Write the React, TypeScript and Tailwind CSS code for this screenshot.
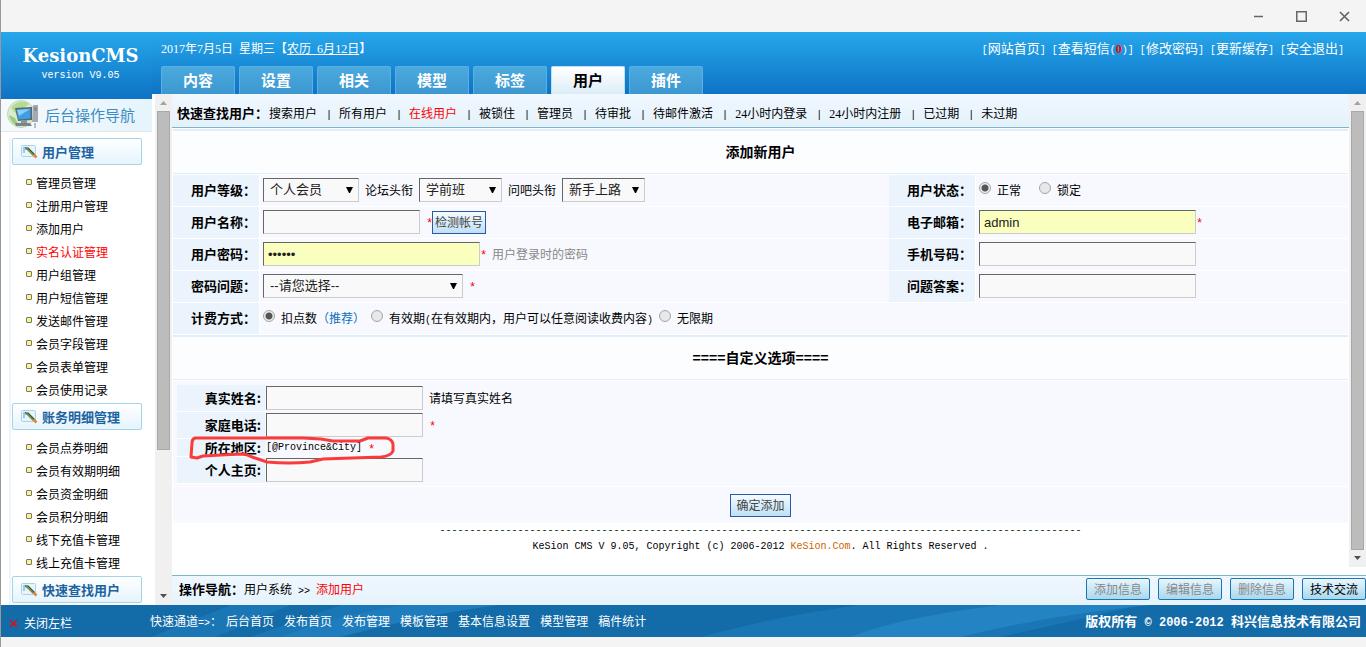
import { useState } from "react";
import type { ReactNode } from "react";
import clsx from "clsx";

const tabs = ["内容", "设置", "相关", "模型", "标签", "用户", "插件"];

const menuGroups = [
  {
    title: "用户管理",
    items: [
      "管理员管理",
      "注册用户管理",
      "添加用户",
      "实名认证管理",
      "用户组管理",
      "用户短信管理",
      "发送邮件管理",
      "会员字段管理",
      "会员表单管理",
      "会员使用记录",
    ],
  },
  {
    title: "账务明细管理",
    items: ["会员点券明细", "会员有效期明细", "会员资金明细", "会员积分明细", "线下充值卡管理", "线上充值卡管理"],
  },
  { title: "快速查找用户", items: [] },
];

const filters = [
  "搜索用户",
  "所有用户",
  "在线用户",
  "被锁住",
  "管理员",
  "待审批",
  "待邮件激活",
  "24小时内登录",
  "24小时内注册",
  "已过期",
  "未过期",
];

const shortcuts = ["后台首页", "发布首页", "发布管理", "模板管理", "基本信息设置", "模型管理", "稿件统计"];

const fieldClass =
  "h-6 border border-t-[#666] border-l-[#666] border-r-[#ccc] border-b-[#ccc] px-1 text-[13px] leading-5 text-[#222] outline-none font-['Liberation_Sans','Noto_Sans_CJK_SC',sans-serif]";

function Mono({ children }: { children: ReactNode }) {
  return (
    <span className="font-['Liberation_Mono','Noto_Sans_CJK_SC',monospace] text-[10px] leading-none">{children}</span>
  );
}

function Num({ children }: { children: ReactNode }) {
  return <span className="font-['Liberation_Serif',serif] text-xs leading-none">{children}</span>;
}

function Star() {
  return (
    <span className="inline-block w-1.5 pt-1 font-['Liberation_Mono',monospace] text-xs leading-3 text-[#f00]">*</span>
  );
}

function Filter({ text }: { text: string }) {
  const match = text.match(/^(\d+)(.*)$/);
  if (!match) return <>{text}</>;
  return (
    <>
      <Num>{match[1]}</Num>
      {match[2]}
    </>
  );
}

function Select({ id, value, className }: { id: string; value: string; className: string }) {
  return (
    <span className={clsx("relative inline-flex", className)}>
      <select id={id} className={clsx(fieldClass, "w-full appearance-none bg-[#f9f9f9] pl-1.5")}>
        <option>{value}</option>
      </select>
      <svg className="pointer-events-none absolute top-2 right-1.5" width="7" height="8" viewBox="0 0 7 8">
        <path d="M0 1h7L4 7h-1z" fill="#000" />
      </svg>
    </span>
  );
}

function Radio({ id, name, checked }: { id: string; name: string; checked?: boolean }) {
  return (
    <input
      id={id}
      type="radio"
      name={name}
      defaultChecked={checked}
      className="mb-1 size-3 shrink-0 appearance-none rounded-full border border-[#a5a5a5] bg-[#e6e9e9] checked:bg-[radial-gradient(circle,#555_0_3px,#eee_4px)]"
    />
  );
}

function Label({ htmlFor, children }: { htmlFor?: string; children: ReactNode }) {
  return (
    <th className="h-8 border-r border-b border-white bg-[#ebf4fc] pr-[3px] pb-px text-right text-[13px] font-bold">
      <label htmlFor={htmlFor}>{children}</label>
    </th>
  );
}

function Cell({ children, colSpan }: { children: ReactNode; colSpan?: number }) {
  return (
    <td colSpan={colSpan} className="h-8 border-b border-white bg-[#f7f9fe] pt-[3px] pl-[3px] align-top">
      <div className="flex min-h-6 items-center whitespace-nowrap">{children}</div>
    </td>
  );
}

function Scrollbar({ thumb }: { thumb: string }) {
  return (
    <div className="flex w-[17px] shrink-0 flex-col items-center bg-[#f0f0f0]">
      <svg width="17" height="17" viewBox="0 0 17 17">
        <path d="M5 11h7L8.500 7z" fill="#a3a3a3" />
      </svg>
      <div className="flex min-h-0 w-[13px] flex-1">
        <div className={clsx("w-full border border-[#a8a8a8] bg-[#bcbcbc]", thumb)} />
      </div>
      <svg width="17" height="17" viewBox="0 0 17 17">
        <path d="M5 6h7L8.500 10z" fill="#505050" />
      </svg>
    </div>
  );
}

function EditIcon() {
  return (
    <svg width="17" height="15" viewBox="0 0 17 15">
      <rect x=".5" y="1.500" width="14" height="11" rx="1" fill="#e7f4fc" stroke="#a9d3ea" />
      <path d="M2 3h5v3H4v3H2z" fill="#9ccbe8" />
      <path d="M4 3.500l3 1.500" stroke="#4d6f86" strokeWidth="1.500" />
      <path d="M6 4l7 7" stroke="#6f8f3c" strokeWidth="3" />
      <path d="M7 4l6.500 6.500" stroke="#3f4b3c" strokeWidth="1" />
      <path d="M13 11l2.500 2.500" stroke="#ef7d2d" strokeWidth="2.500" />
    </svg>
  );
}

function ComputerIcon() {
  return (
    <svg width="34" height="32" viewBox="0 0 34 32">
      <circle cx="14" cy="15" r="13.500" fill="#d8ecd0" stroke="#c3d4c6" />
      <path d="M4 9C8 2 18 1 22 5l-8 6-6 3z" fill="#b4dc90" />
      <path d="M2 16l6 3 4 8c-5-1-9-5-10-11z" fill="#9ccc7c" />
      <path d="M26 6h5v17h-6z" fill="#a3abb1" />
      <path d="M27 9h3M27 11h3" stroke="#6d767d" />
      <path d="M8 9l17-1v13l-14 1z" fill="#566875" />
      <path d="M9.500 10.500l14-1v10l-12 1z" fill="#3e9ee4" />
      <path d="M10 11l13-1-11 7z" fill="#8ccdf5" />
      <path d="M14 21h6v3h-6z" fill="#8b9499" />
      <path d="M8 24h15l2 3H9z" fill="#7d858a" />
      <path d="M28 24v5" stroke="#b4bec5" strokeWidth="2" />
    </svg>
  );
}

function Sidebar() {
  return (
    <aside className="flex w-[151px] shrink-0 flex-col overflow-hidden">
      <div className="flex h-[67px] shrink-0 flex-col items-center bg-linear-to-b from-[#27a7eb] to-[#0e73c5] pt-3 pl-2 text-white">
        <h1 className="font-['DejaVu_Serif',serif] text-lg leading-6 font-bold">KesionCMS</h1>
        <p className="font-['Liberation_Mono',monospace] text-[10px] leading-4">version V9.05</p>
      </div>
      <div className="mb-1.5 flex h-[33px] shrink-0 items-center gap-1 border-b border-[#e4e8ea] bg-linear-to-r from-[#f5f9fb] to-[#e6f4fc] pl-1.5 text-[15px] text-[#3b8dc4]">
        <ComputerIcon />
        后台操作导航
      </div>
      <nav className="ml-2 border-l-2 border-[#edf5fd] pl-px">
        {menuGroups.map((group) => (
          <div key={group.title} className="pb-0.5">
            <h2 className="flex h-[27px] w-[130px] items-center gap-1 rounded-xs border border-[#a5d3e8] bg-linear-to-b from-white to-[#e5f4fd] pl-2 text-[13px] font-bold text-[#1c639f]">
              <EditIcon />
              {group.title}
            </h2>
            <ul className="pt-1.5 pl-3.5">
              {group.items.map((item) => (
                <li key={item} className="flex h-[23px] items-center gap-1">
                  <span className="mb-0.5 size-1.5 rounded-[1px] border border-[#777] bg-[#fbf582]" />
                  <a href="#" className={item === "实名认证管理" ? "text-[#f00]" : "text-black"}>
                    {item}
                  </a>
                </li>
              ))}
            </ul>
          </div>
        ))}
      </nav>
    </aside>
  );
}

function Header() {
  const [active, setActive] = useState("用户");
  return (
    <header className="flex h-[62px] shrink-0 flex-col justify-between bg-linear-to-b from-[#27a7eb] to-[#0e73c5] pl-[9px] text-white">
      <div className="flex items-center justify-between pt-2 pr-[22px]">
        <p>
          <Num>2017</Num>年<Num>7</Num>月<Num>5</Num>日<Mono>&nbsp;</Mono>星期三【
          <a href="#" className="underline">
            农历<Mono>&nbsp;</Mono>
            <Num>6</Num>月<Num>12</Num>日
          </a>
          】
        </p>
        <nav className="flex gap-1.5 text-[13px]">
          <a href="#">
            <Mono>[</Mono>网站首页<Mono>]</Mono>
          </a>
          <a href="#">
            <Mono>[</Mono>查看短信<Mono>(</Mono>
            <b className="text-[#f00]">
              <Num>0</Num>
            </b>
            <Mono>)]</Mono>
          </a>
          <a href="#">
            <Mono>[</Mono>修改密码<Mono>]</Mono>
          </a>
          <a href="#">
            <Mono>[</Mono>更新缓存<Mono>]</Mono>
          </a>
          <a href="#">
            <Mono>[</Mono>安全退出<Mono>]</Mono>
          </a>
        </nav>
      </div>
      <div className="flex gap-1">
        {tabs.map((tab) => (
          <button
            key={tab}
            type="button"
            onClick={() => setActive(tab)}
            className={clsx(
              "h-7 w-[74px] rounded-t-xs border border-b-0 pb-0.5 text-[15px] font-bold",
              tab === active
                ? "border-[#bfe0f2] bg-linear-to-b from-white to-[#dcedf7] text-black"
                : "border-[#5bb0e3] bg-linear-to-b from-[#4baade] to-[#3c97d0] text-white"
            )}
          >
            {tab}
          </button>
        ))}
      </div>
    </header>
  );
}

function SectionTitle({ children }: { children: ReactNode }) {
  return (
    <h2 className="flex h-[45px] items-center justify-center border-t-2 border-b border-[#dfeefb] bg-[#fcfdff] pb-0.5 text-sm font-bold">
      {children}
    </h2>
  );
}

function CustomRow({ id, label, height, children }: { id?: string; label: string; height: string; children: ReactNode }) {
  return (
    <tr>
      <th className={clsx("w-[88px] border-b border-white bg-[#ebf4fc] pr-1 text-right text-[13px] leading-4", height)}>
        <label htmlFor={id}>{label}:</label>
      </th>
      <td className="pt-px pl-px align-top">
        <div className="flex items-center gap-1.5 leading-4">{children}</div>
      </td>
    </tr>
  );
}

function UserForm() {
  return (
    <form>
      <SectionTitle>添加新用户</SectionTitle>
      <table className="mt-px w-full table-fixed border-separate border-spacing-0">
        <colgroup>
          <col className="w-[87px]" />
          <col />
          <col className="w-[87px]" />
          <col className="w-[372px]" />
        </colgroup>
        <tbody>
          <tr>
            <Label htmlFor="level">用户等级：</Label>
            <Cell>
              <Select id="level" value="个人会员" className="w-24" />
              <label htmlFor="forum" className="mx-1.5">
                论坛头衔
              </label>
              <Select id="forum" value="学前班" className="w-[83px]" />
              <label htmlFor="ask" className="mx-1.5">
                问吧头衔
              </label>
              <Select id="ask" value="新手上路" className="w-[83px]" />
            </Cell>
            <Label>用户状态：</Label>
            <Cell>
              <Radio id="normal" name="state" checked />
              <label htmlFor="normal" className="mr-[18px] ml-1.5">
                正常
              </label>
              <Radio id="locked" name="state" />
              <label htmlFor="locked" className="ml-1.5">
                锁定
              </label>
            </Cell>
          </tr>
          <tr>
            <Label htmlFor="name">用户名称：</Label>
            <Cell>
              <input id="name" type="text" className={clsx(fieldClass, "mr-1.5 w-[157px] bg-[#f9f9f9]")} />
              <Star />
              <button
                type="button"
                className="h-[23px] border border-[#2c5aa8] bg-linear-to-b from-[#f4fbff] to-[#bfe0f5] px-0.5 text-[#444]"
              >
                检测帐号
              </button>
            </Cell>
            <Label htmlFor="mail">电子邮箱：</Label>
            <Cell>
              <input id="mail" type="text" defaultValue="admin" className={clsx(fieldClass, "w-[217px] bg-[#faffbd]")} />
              <Star />
            </Cell>
          </tr>
          <tr>
            <Label htmlFor="password">用户密码：</Label>
            <Cell>
              <input
                id="password"
                type="password"
                defaultValue="123456"
                className={clsx(fieldClass, "w-[217px] bg-[#faffbd]")}
              />
              <Star />
              <span className="ml-1.5 text-[#888]">用户登录时的密码</span>
            </Cell>
            <Label htmlFor="mobile">手机号码：</Label>
            <Cell>
              <input id="mobile" type="text" className={clsx(fieldClass, "w-[217px] bg-[#f9f9f9]")} />
            </Cell>
          </tr>
          <tr>
            <Label htmlFor="question">密码问题：</Label>
            <Cell>
              <Select id="question" value="--请您选择--" className="mr-1.5 w-[200px]" />
              <Star />
            </Cell>
            <Label htmlFor="answer">问题答案：</Label>
            <Cell>
              <input id="answer" type="text" className={clsx(fieldClass, "w-[217px] bg-[#f9f9f9]")} />
            </Cell>
          </tr>
          <tr>
            <Label>计费方式：</Label>
            <Cell colSpan={3}>
              <Radio id="points" name="charge" checked />
              <label htmlFor="points" className="mr-1.5 ml-1.5">
                扣点数<span className="text-[#0f6fc0]">（推荐）</span>
              </label>
              <Radio id="period" name="charge" />
              <label htmlFor="period" className="mr-1.5 ml-1.5">
                有效期<Mono>(</Mono>在有效期内，用户可以任意阅读收费内容<Mono>)</Mono>
              </label>
              <Radio id="forever" name="charge" />
              <label htmlFor="forever" className="ml-1.5">
                无限期
              </label>
            </Cell>
          </tr>
        </tbody>
      </table>
      <SectionTitle>====自定义选项====</SectionTitle>
      <div className="relative mt-px bg-[#f7f9fe] px-1 pt-1 pb-0.5">
        <table className="w-full border-separate border-spacing-0">
          <tbody>
            <CustomRow id="realname" label="真实姓名" height="h-[27px]">
              <input id="realname" type="text" className={clsx(fieldClass, "w-[157px] bg-[#f9f9f9]")} />
              请填写真实姓名
            </CustomRow>
            <CustomRow id="phone" label="家庭电话" height="h-[27px]">
              <input id="phone" type="text" className={clsx(fieldClass, "w-[157px] bg-[#f9f9f9]")} />
              <Star />
            </CustomRow>
            <CustomRow label="所在地区" height="h-[18px]">
              <Mono>[@Province&amp;City]</Mono>
              <Star />
            </CustomRow>
            <CustomRow id="homepage" label="个人主页" height="h-[27px]">
              <input id="homepage" type="text" className={clsx(fieldClass, "w-[157px] bg-[#f9f9f9]")} />
            </CustomRow>
          </tbody>
        </table>
        <svg className="pointer-events-none absolute top-[52px] left-3.5" width="212" height="34" viewBox="0 0 212 34">
          <path
            d="M8 5Q5 6 5 10L4 24L10 25L16 23L54 21Q60 21 65 24L80 29Q102 31 123 29L136 26L194 24Q204 23 206 18V11Q205 6 199 5L181 5L173 8H146L134 6L116 5Z"
            fill="none"
            stroke="#fb3b3b"
            strokeWidth="3"
            strokeLinejoin="round"
          />
        </svg>
      </div>
      <div className="mt-px flex h-9 items-center justify-center bg-[#f7f9fe]">
        <button
          type="submit"
          className="h-[23px] border border-[#2c5aa8] bg-linear-to-b from-[#f4fbff] to-[#bfe0f5] px-[5px] text-[#444]"
        >
          确定添加
        </button>
      </div>
    </form>
  );
}

function Toolbar() {
  return (
    <div className="flex h-[30px] shrink-0 items-center justify-between overflow-hidden border-t border-[#7fb4c9] bg-linear-to-b from-[#eff7ff] to-[#e6f3fb] pb-1 pl-[7px]">
      <p>
        <b className="text-[13px]">操作导航：</b>用户系统<Mono>&nbsp;&gt;&gt;&nbsp;</Mono>
        <span className="text-[#f00]">添加用户</span>
      </p>
      <div className="flex gap-2">
        {["添加信息", "编辑信息", "删除信息", "技术交流"].map((text) => (
          <button
            key={text}
            type="button"
            disabled={text !== "技术交流"}
            className="h-[22px] w-16 rounded-xs border border-[#1b76b5] bg-linear-to-b from-[#e9f6fd] to-[#a9d8ee] text-black disabled:text-[#888]"
          >
            {text}
          </button>
        ))}
      </div>
    </div>
  );
}

function Footer() {
  return (
    <footer className="relative flex h-8 shrink-0 items-center bg-[#136ba8] text-white">
      <svg className="absolute inset-0 h-full w-full" viewBox="0 0 1366 32" preserveAspectRatio="none">
        <path d="M150 32L230 0h60L215 32z" fill="#1a76b5" />
        <path d="M250 32L340 0h140Q400 10 340 32z" fill="#1a76b5" />
        <path d="M340 32Q430 8 500 0H400Q320 15 280 32z" fill="#1f7dbd" />
        <path d="M700 32Q780 10 860 0h280Q1090 12 1000 32z" fill="#1a76b5" />
        <path d="M960 32Q1050 10 1150 0H1000Q900 12 850 32z" fill="#2383c3" />
      </svg>
      <a href="#" className="relative flex w-[149px] items-center gap-1.5 pt-1 pl-2">
        <svg width="9" height="9" viewBox="0 0 9 9">
          <path d="M1 1l7 7M8 1L1 8" stroke="#f00" strokeWidth="1.200" />
        </svg>
        关闭左栏
      </a>
      <p className="relative mr-1">
        快速通道<Mono>=&gt;</Mono>：
      </p>
      <nav className="relative flex flex-1 gap-2.5">
        {shortcuts.map((text) => (
          <a key={text} href="#">
            {text}
          </a>
        ))}
      </nav>
      <p className="relative pr-[5px] text-[13px] font-bold">
        版权所有
        <span className="font-['Liberation_Mono',monospace] text-xs leading-none">&nbsp;©&nbsp;2006-2012&nbsp;</span>
        科兴信息技术有限公司
      </p>
    </footer>
  );
}

export default function App() {
  return (
    <div className="flex h-screen flex-col overflow-hidden border-l border-[#999] bg-white font-['Noto_Sans_CJK_SC',sans-serif] text-xs leading-4 text-black">
      <div className="flex h-8 shrink-0 items-center justify-end gap-8 bg-[#f4f4f4] pr-4 text-[#666]">
        <button type="button" aria-label="最小化">
          <svg width="11" height="11" viewBox="0 0 11 11">
            <path d="M1 5.500h9" stroke="currentColor" strokeWidth="1.500" />
          </svg>
        </button>
        <button type="button" aria-label="最大化">
          <svg width="11" height="11" viewBox="0 0 11 11">
            <rect x=".75" y=".75" width="9.500" height="9.500" fill="none" stroke="currentColor" strokeWidth="1.500" />
          </svg>
        </button>
        <button type="button" aria-label="关闭">
          <svg width="11" height="11" viewBox="0 0 11 11">
            <path d="M1 1l9 9M10 1l-9 9" stroke="currentColor" strokeWidth="1.700" />
          </svg>
        </button>
      </div>

      <div className="flex min-h-0 flex-1">
        <Sidebar />
        <div className="flex min-w-0 flex-1 flex-col">
          <Header />
          <div className="flex min-h-0 flex-1 pl-[3px]">
            <Scrollbar thumb="h-[71%]" />
            <div className="flex min-w-0 flex-1 flex-col">
              <div className="mb-2 flex min-h-0 flex-1">
                <main className="min-w-0 flex-1 overflow-hidden">
                  <nav className="flex h-[34px] items-center border-b border-[#7fb4cf] bg-linear-to-b from-[#f0f7ff] to-[#e5f2fa] pt-1 pl-[5px] whitespace-nowrap">
                    <b className="mr-px text-[13px]">快速查找用户：</b>
                    {filters.map((text, i) => (
                      <span key={text} className="flex">
                        {i > 0 && (
                          <span className="w-[22px] pl-0.5 text-center">
                            <Mono>|</Mono>
                          </span>
                        )}
                        <a href="#" className={text === "在线用户" ? "text-[#f00]" : undefined}>
                          <Filter text={text} />
                        </a>
                      </span>
                    ))}
                  </nav>
                  <div className="px-px pt-px">
                    <UserForm />
                    <div className="overflow-hidden text-center font-['Liberation_Mono',monospace] text-[10px] whitespace-nowrap">
                      <p className="text-[#030]">{"-".repeat(107)}</p>
                      <p>
                        KeSion CMS V 9.05, Copyright (c) 2006-2012{" "}
                        <a href="#" className="text-[#c60]">
                          KeSion.Com
                        </a>
                        . All Rights Reserved .
                      </p>
                    </div>
                  </div>
                </main>
                <Scrollbar thumb="h-full" />
              </div>
              <Toolbar />
            </div>
          </div>
        </div>
      </div>

      <Footer />
      <div className="h-2.5 shrink-0 bg-[#f4f4f4]" />
    </div>
  );
}
